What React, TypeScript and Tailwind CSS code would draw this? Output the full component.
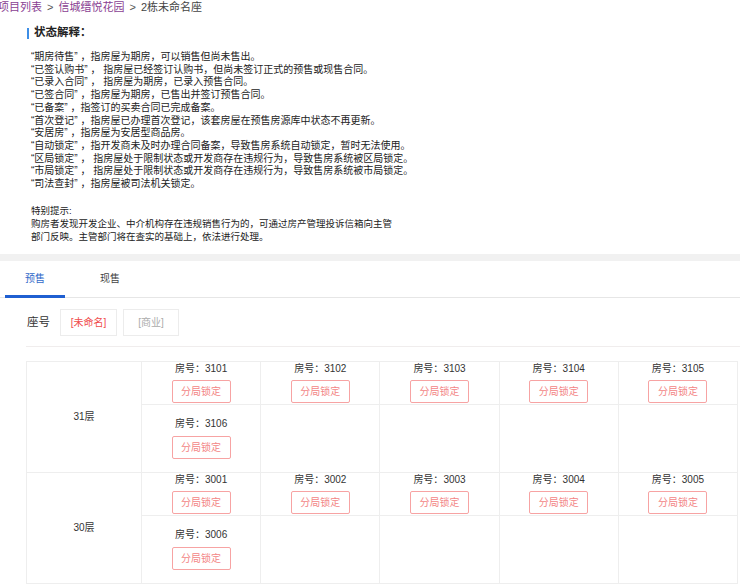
import React from "react";

const notes = [
  "“期房待售” ，指房屋为期房，可以销售但尚未售出。",
  "“已签认购书” ， 指房屋已经签订认购书，但尚未签订正式的预售或现售合同。",
  "“已录入合同” ， 指房屋为期房，已录入预售合同。",
  "“已签合同” ，指房屋为期房，已售出并签订预售合同。",
  "“已备案” ，指签订的买卖合同已完成备案。",
  "“首次登记” ，指房屋已办理首次登记，该套房屋在预售房源库中状态不再更新。",
  "“安居房” ，指房屋为安居型商品房。",
  "“自动锁定” ，指开发商未及时办理合同备案，导致售房系统自动锁定，暂时无法使用。",
  "“区局锁定” ， 指房屋处于限制状态或开发商存在违规行为，导致售房系统被区局锁定。",
  "“市局锁定” ， 指房屋处于限制状态或开发商存在违规行为，导致售房系统被市局锁定。",
  "“司法查封” ，指房屋被司法机关锁定。",
];

const floors = [
  { name: "31层", rooms: ["3101", "3102", "3103", "3104", "3105", "3106"] },
  { name: "30层", rooms: ["3001", "3002", "3003", "3004", "3005", "3006"] },
];

function RoomCell({ room, first }: { room?: string; first: boolean }) {
  return (
    <div
      className={`flex-1 border-r border-[#eeeeee] flex flex-col items-center ${
        first ? "h-[42px] pt-px" : "h-[68px] pt-[13px] border-t"
      }`}
    >
      {room && (
        <>
          <div className="text-[10px] leading-[12px] text-[#333]">房号：{room}</div>
          <div
            className={`${first ? "mt-[5px]" : "mt-[6px]"} w-[59px] h-[23px] border border-[#f7a3a3] rounded-[2px] flex items-center justify-center text-[10px] text-[#f38686]`}
          >
            分局锁定
          </div>
        </>
      )}
    </div>
  );
}

export default function App() {
  return (
    <div
      className="w-[740px] h-[584px] overflow-hidden bg-white text-[#333]"
      style={{ fontFamily: '"Liberation Sans", "Noto Sans CJK SC", sans-serif' }}
    >
      {/* breadcrumb */}
      <div className="-ml-[2px] h-[14px] leading-[14px] text-[11px] flex gap-[5px] whitespace-nowrap">
        <span className="text-[#8a3f93]">项目列表</span>
        <span className="text-[#555]">&gt;</span>
        <span className="text-[#8a3f93]">信城缙悦花园</span>
        <span className="text-[#555]">&gt;</span>
        <span className="text-[#444]">2栋未命名座</span>
      </div>

      {/* status explanation */}
      <div className="mt-[12px] ml-[27px] flex items-center h-[14px]">
        <div className="w-[2px] h-[11px] bg-[#3d8ee6]" />
        <div className="ml-[5px] text-[11.5px] font-bold text-[#222]">状态解释：</div>
      </div>
      <div className="ml-[31px] mt-[11px] text-[10px] leading-[12.7px] text-[#222]">
        {notes.map((n) => (
          <div key={n} className="whitespace-nowrap">
            {n}
          </div>
        ))}
      </div>
      <div className="ml-[31px] mt-[13px] w-[364px] text-[9.5px] leading-[13px] text-[#222]">
        <div>特别提示:</div>
        <div>购房者发现开发企业、中介机构存在违规销售行为的，可通过房产管理投诉信箱向主管部门反映。主管部门将在查实的基础上，依法进行处理。</div>
      </div>

      <div className="mt-[11px] h-[7px] bg-[#f1f1f1]" />

      {/* tabs */}
      <div className="h-[37px] border-b border-[#e6e6e6] flex items-stretch">
        <div className="ml-[5px] w-[60px] relative flex items-center justify-center text-[10px] text-[#3169c9]">
          预售
          <div className="absolute left-0 right-0 -bottom-px h-[3px] bg-[#1f5fd1]" />
        </div>
        <div className="ml-[35px] flex items-center text-[10px] text-[#444]">现售</div>
      </div>

      {/* seat row */}
      <div className="ml-[26px] mt-[11px] pb-[10px] border-b border-[#f0eded] flex items-center">
        <div className="w-[34px] pl-px text-[11.5px] text-[#333]">座号</div>
        <div className="w-[57px] h-[27px] border border-[#ececec] flex items-center justify-center text-[10px] text-[#f04b4b]">
          [未命名]
        </div>
        <div className="ml-[6px] w-[56px] h-[27px] border border-[#ececec] flex items-center justify-center text-[10px] text-[#aaa]">
          [商业]
        </div>
      </div>

      {/* floor table */}
      <div className="ml-[26px] mr-[2px] mt-[14px] border-t border-l border-[#eeeeee]">
        {floors.map((f) => (
          <div key={f.name} className="flex border-b border-[#eeeeee]">
            <div className="w-[115px] shrink-0 border-r border-[#eeeeee] flex items-center justify-center text-[10px] text-[#333]">
              {f.name}
            </div>
            <div className="flex-1 flex flex-col">
              <div className="flex">
                {f.rooms.slice(0, 5).map((r) => (
                  <RoomCell key={r} room={r} first />
                ))}
              </div>
              <div className="flex">
                {[0, 1, 2, 3, 4].map((i) => (
                  <RoomCell key={i} room={i === 0 ? f.rooms[5] : undefined} first={false} />
                ))}
              </div>
            </div>
          </div>
        ))}
      </div>
    </div>
  );
}
